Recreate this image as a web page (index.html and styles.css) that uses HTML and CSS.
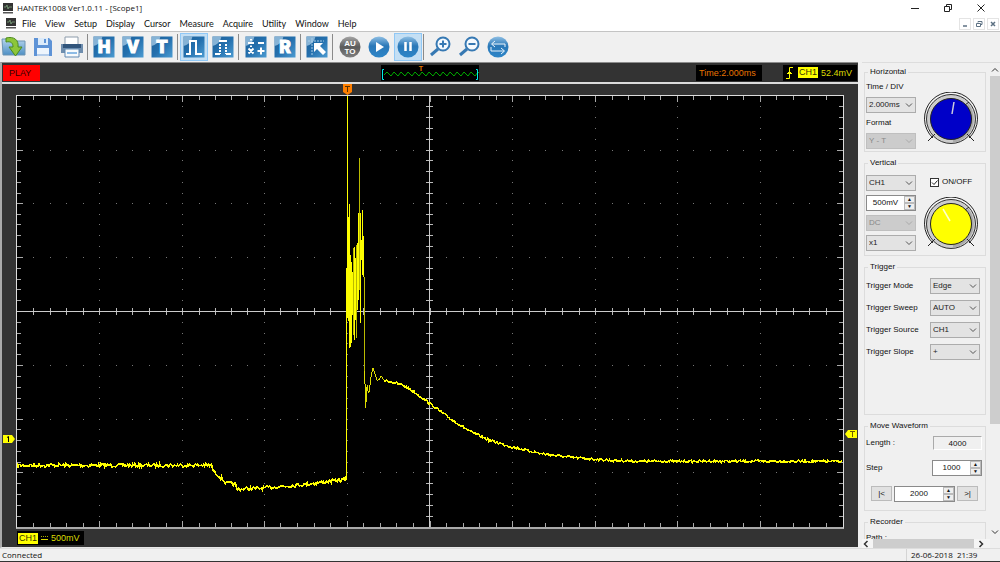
FILE: index.html
```html
<!DOCTYPE html>
<html lang="en">
<head>
<meta charset="utf-8">
<title>HANTEK1008 Ver1.0.11 - [Scope1]</title>
<link rel="stylesheet" href="styles.css">
</head>
<body>
<svg class="defs" aria-hidden="true">
  <defs>
    <linearGradient id="blue" x1="0" y1="0" x2="1" y2="1"><stop offset="0" stop-color="#1d5f97"/><stop offset=".5" stop-color="#2470ae"/><stop offset="1" stop-color="#4d9cd2"/></linearGradient>
    <linearGradient id="ball" x1="0" y1="0" x2="0" y2="1"><stop offset="0" stop-color="#8fbfe4"/><stop offset=".45" stop-color="#2a78b8"/><stop offset="1" stop-color="#2e86c8"/></linearGradient>
    <linearGradient id="grey" x1="0" y1="0" x2="0" y2="1"><stop offset="0" stop-color="#a5a5a5"/><stop offset=".5" stop-color="#5b5b5b"/><stop offset="1" stop-color="#808080"/></linearGradient>
    <linearGradient id="folder" x1="0" y1="0" x2="0" y2="1"><stop offset="0" stop-color="#b6d6ee"/><stop offset="1" stop-color="#4e8fc4"/></linearGradient>
    <symbol id="tile" viewBox="0 0 22 22"><rect x=".5" y=".5" width="21" height="21" fill="url(#blue)"/><path d="M.5.5h9Q8 8 .5 10z" fill="#a9cde8" opacity=".75"/></symbol>
    <symbol id="monitor" viewBox="0 0 12 11"><rect x="1" y="0" width="10" height="8" fill="#333"/><path d="M2 4h2l1-2 1 4 1-2h3" fill="none" stroke="#7ea67e" stroke-width=".8"/><path d="M1 9h10v1.500H1z" fill="#555"/></symbol>
    <symbol id="chev" viewBox="0 0 8 6"><path d="M1 1.500l3 3 3-3" fill="none" stroke="currentColor"/></symbol>
    <symbol id="knob" viewBox="0 0 56 54">
      <path d="M10 46a26.500 26.500 0 1 1 36 0" fill="#f5f5f5" stroke="#222"/>
      <circle cx="28" cy="27" r="24.500" fill="#ccc" stroke="#333"/>
      <path d="M44 13A22.500 22.500 0 0 1 30 49" fill="none" stroke="#aaa" stroke-width="4"/>
      <circle cx="28" cy="27" r="20.500" fill="currentColor" stroke="#222"/>
      <path d="M12 42l-7 7M44 42l7 7M42 13l4-3" stroke="#222" fill="none"/>
    </symbol>
  </defs>
</svg>
<div class="app">
  <header class="title">
    <svg width="12" height="11"><use href="#monitor"/></svg>
    <span class="grow">HANTEK1008 Ver1.0.11 - [Scope1]</span>
    <div class="winbtns">
      <button aria-label="Minimize"><svg width="10" height="10"><path d="M1 5.500h8" stroke="#222"/></svg></button>
      <button aria-label="Restore"><svg width="10" height="10"><path d="M1.500 3.500h5v5h-5zM3.500 3V1.500h5v5H7" fill="none" stroke="#222"/></svg></button>
      <button aria-label="Close"><svg width="10" height="10"><path d="M1.500 1.500l7 7m0-7l-7 7" stroke="#222"/></svg></button>
    </div>
  </header>
  <nav class="menu">
    <svg width="12" height="11"><use href="#monitor"/></svg>
    <button>File</button><button>View</button><button>Setup</button><button>Display</button><button>Cursor</button><button>Measure</button><button>Acquire</button><button>Utility</button><button>Window</button><button>Help</button>
    <div class="docbtns">
      <button aria-label="Minimize document"><svg width="8" height="8"><path d="M2 6h4" stroke="#5d7183" stroke-width="1.500"/></svg></button>
      <button aria-label="Restore document"><svg width="8" height="8"><path d="M1.500 3.500h4v3h-4zM3 2.500v-1h4v3H6" fill="none" stroke="#5d7183"/></svg></button>
      <button aria-label="Close document"><svg width="8" height="8"><path d="M2 2l4 4m0-4l-4 4" stroke="#5d7183" stroke-width="1.500"/></svg></button>
    </div>
  </nav>
  <div class="toolbar" role="toolbar" aria-label="Tools">
    <button aria-label="Open"><svg width="26" height="22" viewBox="0 0 26 22"><path d="M1 3h8l2 2h13v14H2z" fill="url(#folder)" stroke="#6d94b3"/><path d="M5 2c8-2 13 2 12 9h4l-6.500 9L8 11h4c0-4-2-6-7-5z" fill="#8cc63a" stroke="#4b8a1d"/></svg></button>
    <button aria-label="Save"><svg width="20" height="20" viewBox="0 0 20 20"><path d="M1 1h15l3 3v15H1z" fill="#5e93d6"/><path d="M5 1h10v7H5z" fill="#dcebfa"/><path d="M11 2h2v4h-2z" fill="#5e93d6"/><path d="M4 11h12v8H4z" fill="#eef5fd"/><path d="M4 17h12v2H4z" fill="#b5cdeb"/></svg></button>
    <button aria-label="Print"><svg width="24" height="22" viewBox="0 0 24 22"><path d="M5 1h13v9H5z" fill="#fff" stroke="#8d9cab"/><path d="M1 8h22v9H1z" fill="#6f8eae"/><path d="M3 8h18v4H3z" fill="#31557c"/><path d="M5 13h14v8H5z" fill="#f7fafc" stroke="#6189b2"/><path d="M7 17h10" stroke="#8dbbe5" stroke-width="2"/></svg></button>
    <i class="sep"></i>
    <button aria-label="Horizontal"><svg width="22" height="22"><use href="#tile"/><text class="letter" x="11" y="17">H</text></svg></button>
    <button aria-label="Vertical"><svg width="22" height="22"><use href="#tile"/><text class="letter" x="11" y="17">V</text></svg></button>
    <button aria-label="Trigger"><svg width="22" height="22"><use href="#tile"/><text class="letter" x="11" y="17">T</text></svg></button>
    <i class="sep"></i>
    <button class="on" aria-label="Pulse"><svg width="22" height="22"><use href="#tile"/><path d="M3 18h4V5h6v13h6" fill="none" stroke="#fff" stroke-width="2"/></svg></button>
    <button aria-label="Dotted pulse"><svg width="22" height="22"><use href="#tile"/><path d="M3 18h5m6 0h5M7 5h8" stroke="#fff" stroke-width="2"/><path d="M8 8v10m6-10v10" stroke="#fff" stroke-width="2" stroke-dasharray="2 1"/></svg></button>
    <i class="sep wide"></i>
    <button aria-label="Math"><svg width="22" height="22"><use href="#tile"/><path d="M3 7h6M13 7h6M12.500 15h7M16 11.500v7M3.500 12.500l5 5m0-5l-5 5M6 3v1.500m0 5v1.500" stroke="#fff" stroke-width="2"/></svg></button>
    <button aria-label="Reference"><svg width="22" height="22"><use href="#tile"/><text class="letter" x="11" y="17">R</text></svg></button>
    <i class="sep"></i>
    <button aria-label="Cursor"><svg width="22" height="22"><use href="#tile"/><path d="M2 5h16M6 2v17" stroke="#a7cde8" stroke-dasharray="2 1"/><path d="M8 7h9l-3 3 6 6-3 3-6-6-3 3z" fill="#fff"/></svg></button>
    <i class="sep wide"></i>
    <button aria-label="Auto"><svg width="22" height="22"><circle cx="11" cy="11" r="10.500" fill="url(#grey)"/><text class="auto" x="11" y="10">AU</text><text class="auto" x="11" y="18">TO</text></svg></button>
    <button aria-label="Run"><svg width="22" height="22"><circle cx="11" cy="11" r="10.500" fill="url(#ball)"/><path d="M8 6l8 5-8 5z" fill="#fff"/></svg></button>
    <button class="on" aria-label="Pause"><svg width="22" height="22"><circle cx="11" cy="11" r="10.500" fill="url(#ball)"/><path d="M8.500 6v9m5-9v9" stroke="#fff" stroke-width="2.500"/></svg></button>
    <i class="sep"></i>
    <button aria-label="Zoom in"><svg width="22" height="22" fill="none" stroke="#3779b3"><circle cx="14" cy="8" r="6.500" stroke-width="2" fill="#f5fafe"/><path d="M9 13l-7 6" stroke-width="3"/><path d="M10.500 8h7M14 4.500v7" stroke-width="2"/></svg></button>
    <button aria-label="Zoom out"><svg width="22" height="22" fill="none" stroke="#3779b3"><circle cx="14" cy="8" r="6.500" stroke-width="2" fill="#f5fafe"/><path d="M9 13l-7 6" stroke-width="3"/><path d="M10.500 8h7" stroke-width="2"/></svg></button>
    <button aria-label="Swap"><svg width="22" height="22"><circle cx="11" cy="11" r="10.500" fill="url(#ball)"/><path d="M18 11V8H5m3-3L4.500 8 8 11M4 11v4h13m-3-3l3.500 3-3.500 3" fill="none" stroke="#e9f4fc"/></svg></button>
  </div>

  <main class="main">
    <section class="scope">
      <div class="info">
        <div class="play">PLAY</div>
        <div class="mini"><svg width="98" height="16" viewBox="0 0 98 16"><path d="M3 10l3-3 4 4 3-4 4 4 3-4 4 4 3-4 4 4 3-4 4 4 3-4 4 4 3-4 4 4 3-4 4 4 3-4 4 4 3-4 4 4 3-4 4 4 3-4 4 4 3-4 4 4 3-4 2 2" fill="none" stroke="#00a800"/><path d="M3 4.500H1.500v10H3M95 4.500h1.500v10H95" fill="none" stroke="#0ee"/><text class="minit" x="40" y="6">T</text></svg></div>
        <div class="right">
          <div class="readout time">Time:2.000ms</div>
          <div class="readout trig"><svg width="10" height="12" viewBox="0 0 10 12"><path d="M1 11.500h3.500v-11H8M2 6.500h5M3 5.500h3" fill="none" stroke="#ff0"/></svg><span class="chip">CH1</span><span>52.4mV</span></div>
        </div>
      </div>
      <div class="stage">
        <svg class="mark-top" width="9" height="11"><path d="M0 0h9v8L4.500 11 0 8z" fill="#ff7f00"/><path d="M2 2.500h5M4.500 2v6" stroke="#5a3000"/></svg>
        <svg class="mark-left" width="12" height="8"><path d="M0 0h9l3 4-3 4H0z" fill="#ff0"/><path d="M4 2.500l1.500-1v5.500" stroke="#000" fill="none"/></svg>
        <svg class="mark-right" width="12" height="8"><path d="M12 0H3L0 4l3 4h9z" fill="#ff0"/><path d="M5 1.500h5M7.500 1v6" stroke="#6b5a00"/></svg>
        <svg class="plot" id="plot" viewBox="0 0 828 433" preserveAspectRatio="none" role="img" aria-label="Channel 1 waveform"></svg>
      </div>
      <div class="channels"><div class="readout ch"><span class="chip">CH1</span><svg width="7" height="6"><path d="M0 1.500h7" stroke="#aa0"  stroke-dasharray="1 1"/><path d="M0 4.500h7" stroke="#dd0"/></svg><span>500mV</span></div></div>
    </section>

    <aside class="side">
      <div class="panel">
        <fieldset class="g-h"><legend>Horizontal</legend>
          <div class="cols">
            <div class="stack tight">
              <label for="td">Time / DIV</label>
              <div class="sel"><select id="td"><option>2.000ms</option></select><svg width="8" height="6"><use href="#chev"/></svg></div>
              <label for="fm">Format</label>
              <div class="sel off"><select id="fm" disabled><option>Y - T</option></select><svg width="8" height="6"><use href="#chev"/></svg></div>
            </div>
            <div class="dial blue"><svg width="56" height="54"><use href="#knob"/><path d="M29 22l2-12" stroke="#ccd" stroke-width="1.500"/></svg></div>
          </div>
        </fieldset>
        <fieldset class="g-v"><legend>Vertical</legend>
          <div class="cols">
            <div class="stack">
              <div class="sel"><select aria-label="Channel"><option>CH1</option></select><svg width="8" height="6"><use href="#chev"/></svg></div>
              <div class="spin"><input aria-label="Volts per division" value="500mV"><div><button aria-label="Up">▲</button><button aria-label="Down">▼</button></div></div>
              <div class="sel off"><select aria-label="Coupling" disabled><option>DC</option></select><svg width="8" height="6"><use href="#chev"/></svg></div>
              <div class="sel"><select aria-label="Probe"><option>x1</option></select><svg width="8" height="6"><use href="#chev"/></svg></div>
            </div>
            <div class="dial yellow"><label class="check"><input type="checkbox" checked><svg width="9" height="9"><path d="M2 4.500l2 2 3.500-4" fill="none" stroke="#222"/></svg><span>ON/OFF</span></label><svg width="56" height="54"><use href="#knob"/><path d="M27 24l-7-12" stroke="#ffc" stroke-width="1.500"/></svg></div>
          </div>
        </fieldset>
        <fieldset class="g-t"><legend>Trigger</legend>
          <div class="row"><label for="tm">Trigger Mode</label><div class="sel"><select id="tm"><option>Edge</option></select><svg width="8" height="6"><use href="#chev"/></svg></div></div>
          <div class="row"><label for="ts">Trigger Sweep</label><div class="sel"><select id="ts"><option>AUTO</option></select><svg width="8" height="6"><use href="#chev"/></svg></div></div>
          <div class="row"><label for="tc">Trigger Source</label><div class="sel"><select id="tc"><option>CH1</option></select><svg width="8" height="6"><use href="#chev"/></svg></div></div>
          <div class="row"><label for="tl">Trigger Slope</label><div class="sel"><select id="tl"><option>+</option></select><svg width="8" height="6"><use href="#chev"/></svg></div></div>
        </fieldset>
        <fieldset class="g-m"><legend>Move Waveform</legend>
          <div class="row"><label for="len">Length :</label><input class="len" id="len" value="4000" readonly></div>
          <div class="row"><label for="step">Step</label><div class="spin"><input id="step" value="1000"><div><button aria-label="Up">▲</button><button aria-label="Down">▼</button></div></div></div>
          <div class="move"><button>|&lt;</button><div class="spin"><input aria-label="Position" value="2000"><div><button aria-label="Up">▲</button><button aria-label="Down">▼</button></div></div><button>&gt;|</button></div>
        </fieldset>
        <fieldset class="g-r"><legend>Recorder</legend><span>Path :</span></fieldset>
      </div>
      <div class="vbar"><svg width="8" height="6" class="flip"><use href="#chev"/></svg><div class="thumb"></div><svg width="8" height="6"><use href="#chev"/></svg></div>
      <div class="hbar"><svg width="6" height="8"><path d="M4.500 1l-3 3 3 3" fill="none" stroke="#333" stroke-width="1.500"/></svg><div class="thumb"></div><svg width="6" height="8"><path d="M1.500 1l3 3-3 3" fill="none" stroke="#333" stroke-width="1.500"/></svg></div>
    </aside>
  </main>
  <footer class="status"><span class="grow">Connected</span><span class="clock">26-06-2018&nbsp; 21:39</span></footer>
</div>
<script src="scope.js"></script>
</body>
</html>
```
FILE: styles.css
```css
* { box-sizing: border-box; }
body { margin: 0; font: 9px/12px Lato, "Open Sans", sans-serif; color: #111; background: #f0f0f0; }
button, input, select { font: inherit; color: inherit; margin: 0; padding: 0; border: 0; background: none; border-radius: 0; }
svg { display: block; flex: none; }
.defs { position: absolute; width: 0; height: 0; }
.grow { flex: 1; }
.app { height: 100vh; display: flex; flex-direction: column; border-bottom: 1px solid #333; overflow: hidden; }

.title { display: flex; align-items: center; gap: 3px; height: 16px; padding-left: 2px; background: #fff; font: 8px/12px "Open Sans", sans-serif; }
.winbtns { display: flex; gap: 23px; padding-right: 14px; }
.winbtns button { width: 10px; }
.menu { display: flex; align-items: center; height: 16px; padding-left: 5px; gap: 9px; background: #fff; border-bottom: 1px solid #c4c4c4; }
.menu > svg { margin-right: -4px; }
.docbtns { display: flex; gap: 2px; margin-left: auto; padding-right: 1px; }
.docbtns button { border: 1px solid #e4e4e4; width: 12px; height: 12px; display: grid; place-items: center; }

.toolbar { display: flex; align-items: center; gap: 1px; height: 30px; }
.toolbar button { width: 28px; height: 28px; display: grid; place-items: center; border: 1px solid transparent; }
.toolbar button.on { background: #c4dff4; border-color: #90c8f6; }
.sep { width: 1px; height: 26px; background: #8a8a8a; margin-right: 1px; }
.sep.wide { margin-right: 2px; }
.letter { font: 900 18px "Roboto", sans-serif; fill: #fff; stroke: #fff; text-anchor: middle; }
.auto { font: 700 8px "Liberation Sans", sans-serif; fill: #fff; text-anchor: middle; }

.main { flex: 1; min-height: 0; display: flex; font-family: "Liberation Sans", sans-serif; }
.scope { flex: 1; min-width: 0; display: flex; flex-direction: column; background: #333; border-left: 2px solid #aaa; border-top: 1px solid #8c8c8c; margin-right: 4px; border-bottom: 1px solid #e8e8e8; }
.info { height: 21px; display: grid; grid-template-columns: 1fr auto 1fr; align-items: center; border-bottom: 2px solid #ddd; padding: 0 1px; }
.play { width: 37px; height: 16px; line-height: 16px; padding-left: 6px; background: #f00; color: #300; }
.mini { background: #000; }
.minit { font: 700 7px "Liberation Sans", sans-serif; fill: #e87400; text-anchor: middle; }
.right { display: flex; justify-content: flex-end; gap: 21px; }
.readout { display: flex; align-items: center; gap: 5px; height: 16px; background: #000; color: #dd0; }
.time { color: #e87400; width: 66px; padding-left: 3px; }
.trig { width: 74px; padding-left: 2px; gap: 3px; }
.chip { background: #ff0; color: #330; padding: 0 1px; line-height: 11px; }
.stage { position: relative; flex: 1; min-height: 0; padding: 11px 14px 0; }
.plot { width: 100%; height: 100%; background: #000; border: 1px solid #ddd; border-bottom: 2px solid #aaa; shape-rendering: crispEdges; }
.mark-top { position: absolute; left: 341px; top: 0; }
.mark-left { position: absolute; left: 1px; top: 351px; }
.mark-right { position: absolute; right: 1px; top: 346px; }
.channels { padding: 2px 15px; }
.ch { width: 67px; height: 14px; padding-left: 1px; gap: 3px; }

.side { width: 138px; display: grid; grid-template-columns: minmax(0, 1fr) 10px; grid-template-rows: minmax(0, 1fr) 9px; font-size: 8px; line-height: 10px; border-top: 1px solid #ddd; }
.panel { grid-area: 1 / 1; min-height: 0; overflow: hidden; padding: 4px 4px 0 2px; display: flex; flex-direction: column; gap: 6px; }
fieldset { border: 1px solid #dcdcdc; margin: 0; padding: 0 0 0 1px; min-width: 0; flex: none; }
legend { padding: 0 2px; margin-left: 2px; }
.g-h { height: 85px; }
.g-v { height: 98px; }
.g-t { height: 153px; }
.g-m { height: 90px; }
.g-r { height: 40px; }
.cols { display: flex; justify-content: space-between; padding-right: 6px; }
.stack { width: 50px; display: flex; flex-direction: column; gap: 4px; padding-top: 7px; }
.stack.tight { padding-top: 5px; gap: 5px; }
.sel { position: relative; width: 50px; height: 16px; border: 1px solid #acacac; background: #e3e3e3; color: #222; flex: none; }
.sel select { appearance: none; display: block; width: 100%; height: 100%; padding-left: 2px; outline: 0; opacity: 1; }
.sel svg { position: absolute; right: 2px; top: 4px; pointer-events: none; color: #555; }
.sel.off { background: #ccc; border-color: #bfbfbf; color: #888; }
.sel.off svg { color: #aaa; }
.dial { display: flex; flex-direction: column; gap: 10px; }
.dial.blue { padding-top: 15px; color: #0000c8; }
.dial.yellow { padding-top: 9px; color: #ff0; }
.check { position: relative; display: flex; align-items: center; gap: 3px; color: #111; padding-left: 7px; }
.check input { appearance: none; width: 9px; height: 9px; border: 1px solid #333; background: #fff; }
.check svg { position: absolute; left: 7px; pointer-events: none; }
.spin { display: flex; width: 50px; height: 16px; border: 1px solid #8a8a8a; background: #fff; }
.spin input { flex: 1; min-width: 0; text-align: center; }
.spin div { display: flex; flex-direction: column; width: 11px; }
.spin button { flex: 1; min-height: 0; background: #eee; border: 1px solid #bbb; font-size: 5px; line-height: 5px; overflow: hidden; }
.row { display: flex; align-items: center; justify-content: space-between; padding-right: 5px; }
.g-t .row { padding-top: 6px; }
.g-m .row { padding: 5px 3px 5px 0; }
.len { width: 49px; height: 14px; border: 1px solid #aaa; border-right-color: #fff; border-bottom-color: #fff; text-align: center; }
.move { display: flex; gap: 2px; padding: 5px 0 0 5px; }
.move > button { width: 21px; height: 15px; border: 1px solid #bbb; background: #e1e1e1; }
.move .spin { width: 61px; }
.g-r span { display: block; padding-top: 6px; }
.vbar { grid-area: 1 / 2; display: flex; flex-direction: column; align-items: center; padding: 4px 0; gap: 3px; color: #333; }
.vbar .thumb { width: 10px; height: 348px; background: #cdcdcd; margin-bottom: auto; }
.flip { transform: rotate(180deg); }
.hbar { grid-area: 2 / 1; display: flex; align-items: center; gap: 4px; padding-left: 1px; background: #f5f5f5; }
.hbar .thumb { width: 101px; height: 9px; background: #cdcdcd; }

.status { display: flex; align-items: center; height: 13px; padding-left: 2px; border-top: 1px solid #ddd; font: 8px/12px "Open Sans", sans-serif; }
.clock { width: 94px; padding-left: 4px; border-left: 1px solid #d4d4d4; }
```
FILE: scope.js
```js
const W = 828, H = 433, CX = 413, CY = 216;
const DX = W / 10, DY = H / 8;
const parts = [];
const line = (x1, y1, x2, y2, color) =>
  parts.push(`<path d="M${x1} ${y1}L${x2} ${y2}" stroke="${color}"/>`);
const px = v => Math.floor(v) + 0.5;

// graticule: dots on every division line
for (let c = 1; c < 10; c++)
  for (let k = 1; k < 40; k++) line(px(c * DX) - .5, px(k * DY / 5), px(c * DX) + .5, px(k * DY / 5), '#777');
for (let r = 1; r < 8; r++)
  for (let k = 1; k < 50; k++) line(px(k * DX / 5) - .5, px(r * DY), px(k * DX / 5) + .5, px(r * DY), '#777');

// edge and axis ticks
for (let k = 1; k < 50; k++) {
  const x = px(k * DX / 5), n = k % 5 ? 4 : 6;
  line(x, 0, x, n, '#aaa');
  line(x, H, x, H - n, '#aaa');
  line(x, CY - 3, x, CY + 4, '#bbb');
}
for (let k = 1; k < 40; k++) {
  const y = px(k * DY / 5), n = k % 5 ? 4 : 6;
  line(0, y, n, y, '#aaa');
  line(W, y, W - n, y, '#aaa');
  line(CX - 3, y, CX + 4, y, '#bbb');
}
line(0, CY + .5, W, CY + .5, '#ccc');
line(CX + .5, 0, CX + .5, H, '#ccc');

// channel 1 trace
let seed = 7;
const rnd = () => (seed = (seed * 16807) % 2147483647) / 2147483647 - 0.5;
function trace(points, noise) {
  let d = '';
  for (let i = 0; i < points.length - 1; i++) {
    const [x1, y1] = points[i], [x2, y2] = points[i + 1];
    for (let x = x1; x < x2; x++) {
      const y = y1 + (y2 - y1) * (x - x1) / (x2 - x1) + rnd() * noise;
      d += (d ? 'L' : 'M') + x + ' ' + y.toFixed(1);
    }
  }
  parts.push(`<path d="${d}" fill="none" stroke="#ff0" stroke-width="1.6"/>`);
}
trace([[0, 371], [195, 371], [197, 377], [204, 383], [210, 389], [219, 390], [220, 395], [245, 394], [290, 390], [331, 385]], 3.6);
trace([[368, 286], [379, 288], [388, 291], [399, 298], [414, 309], [434, 324], [454, 337], [474, 346], [494, 352], [524, 359], [554, 363], [594, 366], [624, 367], [828, 367]], 2.4);

// ignition burst, one column per sample: x, top, bottom, optional dim flag
const burst = [
  [330, 173, 385], [331, 0, 223], [332, 122, 226], [333, 108, 253], [334, 160, 252], [335, 167, 248],
  [336, 177, 220], [337, 153, 240, 1], [338, 152, 245], [339, 163, 225], [340, 150, 243, 1],
  [341, 148, 215], [342, 118, 205], [343, 62, 195, 1], [344, 118, 228], [345, 145, 165],
  [346, 115, 180], [347, 141, 182], [348, 182, 276, 1]
];
for (const [x, a, b, dim] of burst) line(x + .5, a, x + .5, b, dim ? '#bbbb00' : '#ff0');
parts.push('<path d="M348.500 276L349.500 313L351 290L352 298L353 297L355 281L357 273L359 280L361 286L363 285L365 281L367 285" fill="none" stroke="#dd0"/>');
document.getElementById('plot').innerHTML = parts.join('');
```
